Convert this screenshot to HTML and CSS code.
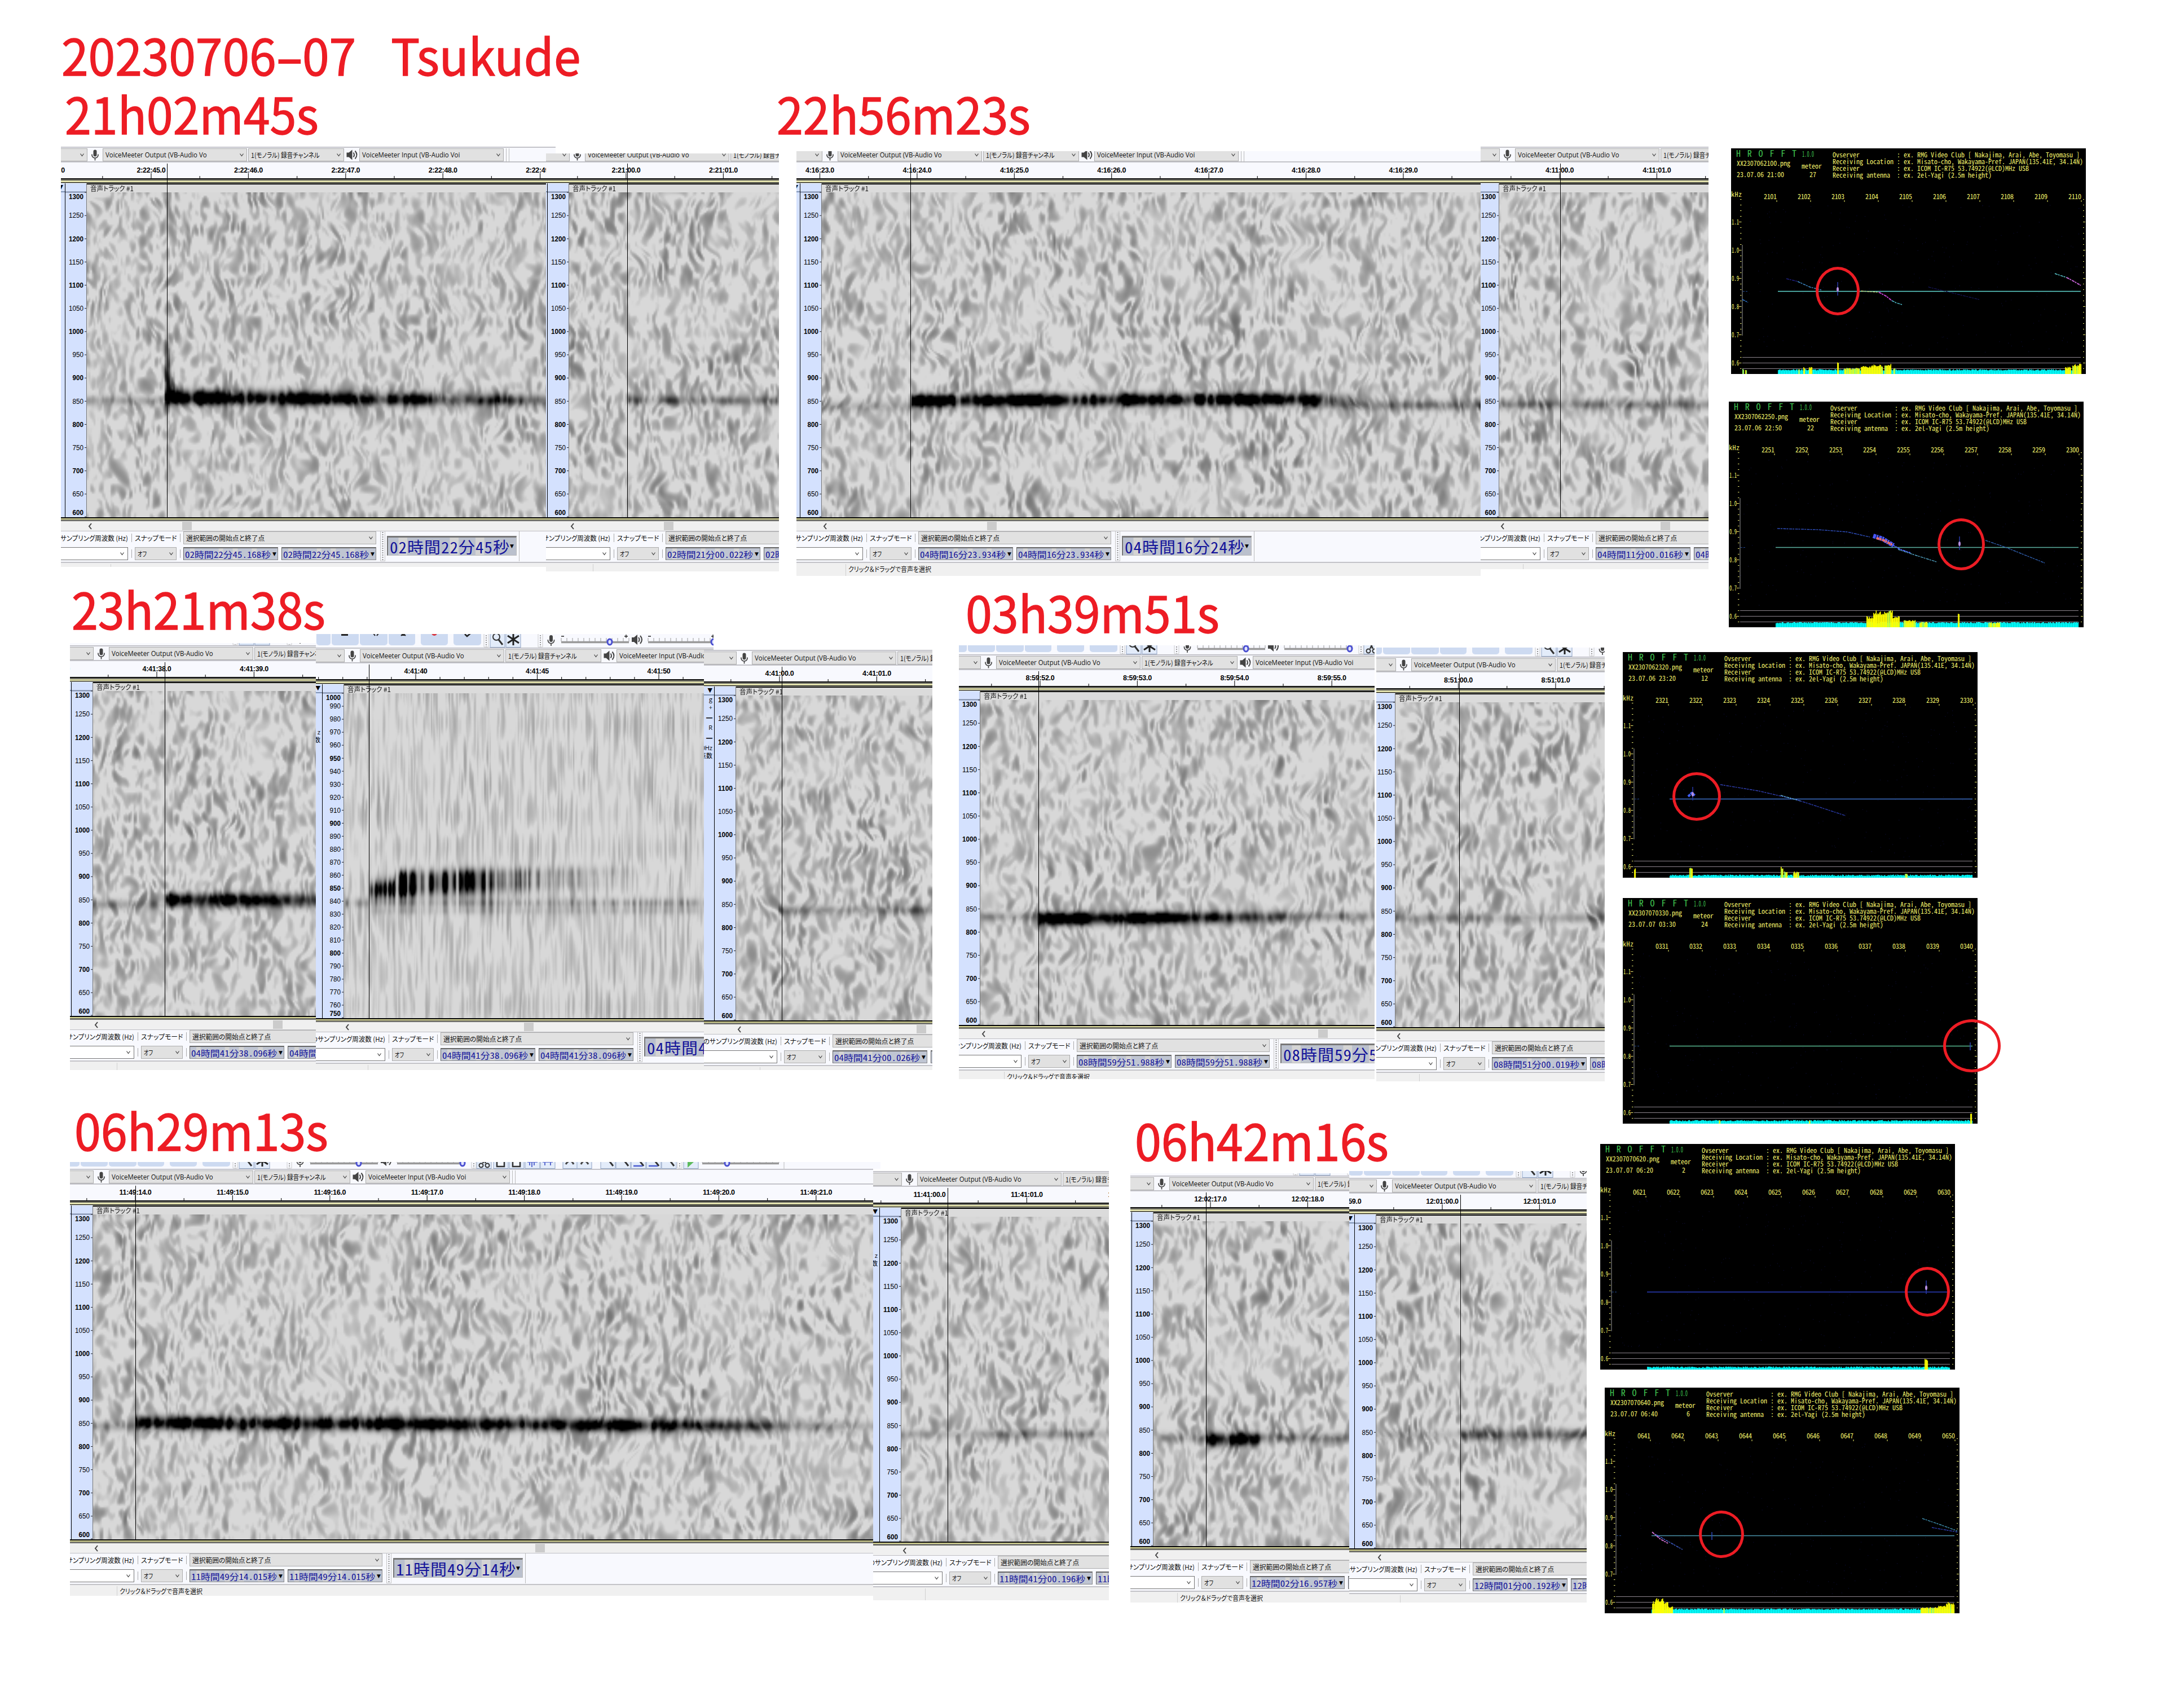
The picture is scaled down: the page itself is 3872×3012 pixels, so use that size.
FILE: index.html
```html
<!DOCTYPE html>
<html lang="ja">
<head>
<meta charset="utf-8">
<title>20230706-07 Tsukude</title>
<link rel="stylesheet" href="styles.css">
</head>
<body>
<main class="sheet" id="sheet">
  <h1 class="mark" style="left:109px;top:47px"><span data-w="920">20230706<span class="dash"><span>-</span></span>07 Tsukude</span></h1>
  <h2 class="mark" style="left:115px;top:151px"><span data-w="450">21h02m45s</span></h2>
  <h2 class="mark" style="left:1377px;top:151px"><span data-w="450">22h56m23s</span></h2>
  <h2 class="mark" style="left:127px;top:1029px"><span data-w="450">23h21m38s</span></h2>
  <h2 class="mark" style="left:1712px;top:1035px"><span data-w="450">03h39m51s</span></h2>
  <h2 class="mark" style="left:132px;top:1953px"><span data-w="450">06h29m13s</span></h2>
  <h2 class="mark" style="left:2012px;top:1971px"><span data-w="450">06h42m16s</span></h2>
</main>
<script src="app.js"></script>
</body>
</html>
```
FILE: styles.css
```css
* { box-sizing: border-box; }
body { margin: 0; background: #fff; }
.sheet { position: relative; width: 3872px; height: 3012px; overflow: hidden; background: #fff; }
.mark { position: absolute; margin: 0; color: #ed1c24; font: 400 88.5px/96px "Noto Sans CJK JP", sans-serif; -webkit-text-stroke: 1.4px #ed1c24; white-space: pre; word-spacing: 44px; }
.dash { display: inline-block; width: 48px; text-align: center; }
.dash span { display: inline-block; transform: scaleX(1.7); }
[data-w] { display: inline-block; white-space: pre; transform-origin: 0 50%; }

.win { position: absolute; overflow: hidden; background: #f8f9fe; font: 12px/16px "Open Sans", "Noto Sans CJK JP", sans-serif; color: #111; }
.inner { display: flex; flex-direction: column; width: 1800px; position: relative; }
.strip { height: 30px; display: block; flex: none; }
.bar { height: 28px; border-top: 2px solid #c3c3c9; border-bottom: 2px solid #c3c3c9; display: flex; padding-top: 1px; }
.combo { height: 23px; background: #e1e1e1; border: 1.5px solid #adadad; display: flex; justify-content: space-between; align-items: center; padding: 0 4px; overflow: hidden; }
.combo svg { flex: none; }
.text { display: block; overflow: visible; white-space: pre; height: 16px; }
.ja { font-family: "Noto Sans CJK JP", sans-serif; font-feature-settings: "palt"; }
.icon { width: 27px; height: 23px; }
.sep { width: 1px; background: #bbb; height: 26px; margin-left: 4px; }
.time { display: block; height: 28px; background: #f8f9fe; }
.band { height: 9px; background: linear-gradient(#111 0 2px, #73736a 2px 4px, #bdbd92 4px 5px, #eeedb6 5px 7px, #000 7px 8px, #cfcfc0 8px 9px); }
.track { display: flex; height: 592px; }
.side { width: 112px; background: #d4e1fe; border-right: 1px solid #000; position: relative; display: flex; flex-direction: column; align-items: flex-end; color: #000; }
.side b { font-size: 11px; line-height: 14px; border-bottom: 2px solid #8094b4; width: 100%; text-align: right; padding-right: 3px; font-family: "DejaVu Sans", sans-serif; }
.side i { font-style: normal; font-size: 11px; line-height: 14px; width: 100%; text-align: right; padding-right: 3px; }
.scale { width: 38px; height: 592px; background: #d4e1fe; flex: none; }
.view { flex: 1; border-top: 2px solid #000; background: #d8d8d8; }
.head { height: 14px; background: #dbdbdb; padding: 0 0 0 6px; line-height: 14px; }
.view canvas { display: block; }
.foot { height: 7px; background: linear-gradient(#000 0 2px, #eeedb0 2px 3px, #c9c77c 3px 4px, #73736d 4px 7px); }
.scroll { height: 17px; background: #f0f0f0; display: flex; align-items: center; padding-left: 152px; }
.thumb { height: 15px; width: 17px; background: #cbcbcb; }
.select { height: 57px; border-top: 1.5px solid #bfbfc4; border-bottom: 2px solid #c3c3c8; display: flex; padding-left: 64px; }
.col { display: flex; flex-direction: column; gap: 5px; }
.line { display: flex; align-items: center; height: 23px; }
.stamps { gap: 6px; }
.rate { width: 159px; justify-content: flex-end; }
.vsep { width: 1px; height: 15px; background: #aaa; margin: 0 5px 0 6px; }
.white { width: 159px; height: 23px; background: #fff; border: 1.5px solid #777; display: flex; align-items: center; justify-content: flex-end; padding-right: 5px; }
.stamp { width: 168px; height: 23px; border: 1.5px solid #8a8a8a; border-top: 2px solid #666; border-left-color: #666; background: #bfc5d2; display: flex; align-items: center; justify-content: space-between; padding: 0 2px; color: #14149a; overflow: hidden; font: 15px/17px "Noto Sans CJK JP", sans-serif; font-feature-settings: "hwid"; }
.stamp u, .big u { text-decoration: none; background: #d4d4d4; }
.stamp s, .big s { text-decoration: none; color: #000; font: 9px/9px "DejaVu Sans", sans-serif; }
.grip { width: 9px; height: 53px; margin-left: 7px; border: 1px solid #c6c6c6; border-top: 0; background: radial-gradient(circle, #999 1px, transparent 1.3px) 0 0/7px 4px; }
.big { margin: 8px 0 0 3px; width: 230px; height: 35px; border: 1px solid #bbb; border-top: 3px solid #777; border-left: 2px solid #777; background: #bac0cd; color: #14149a; display: flex; align-items: center; padding-left: 3px; font: 28px/30px "Noto Sans CJK JP", sans-serif; font-feature-settings: "hwid"; overflow: hidden; }
.big .text { height: 30px; width: 213px; flex: none; letter-spacing: 1px; }
.status { height: 60px; background: #f0f0f0; padding-left: 192px; }
.status div { border-left: 1px solid #d0d0d0; height: 22px; margin-top: 2px; padding: 1px 0 0 4px; }
.cursor { position: absolute; left: 0; top: 60px; width: 1.4px; height: 627px; background: #000; }

.hro { position: absolute; display: block; width: 629px; height: 400px; background: #000; font: 12px "Noto Sans CJK JP", sans-serif; font-feature-settings: "hwid"; }
.hro text { fill: #f2f26a; white-space: pre; }
.hro .logo { fill: #3fc24f; }
.ring { position: absolute; border: 5px solid #ed1c24; border-radius: 50%; }
```
FILE: app.js
```js
const sheet = document.getElementById('sheet');
let seed = 7;
const rnd = () => { seed = (seed * 1664525 + 1013904223) >>> 0; return seed / 4294967296; };
const caret = '<svg width="9" height="7" viewBox="0 0 9 7"><path d="M1.5 1.5l3 4 3-4" fill="none" stroke="#444" stroke-width="1.2"/></svg>';
const mic = '<path d="M0-9a3 3 0 0 1 3 3v6a3 3 0 0 1-6 0v-6a3 3 0 0 1 3-3z" fill="#444"/><path d="M-5.500-1v1.500a5.500 5 0 0 0 11 0V-1M0 5.500V10" fill="none" stroke="#444" stroke-width="1.700"/>';
const spk = '<path d="M-9-4h4l6-5V9l-6-5h-4z" fill="#444"/><path d="M3-4q3 4 0 8M6-7q6 7 0 14" fill="none" stroke="#444" stroke-width="2"/>';
const icon = p => `<svg class="icon" viewBox="-13.500 -11.500 27 23">${p}</svg>`;
const fit = (t, w, c = '') => `<span class="text ${c}" style="width:${w}px"><span data-w="${w}">${t}</span></span>`;
const combo = (w, t) => `<div class="combo" style="width:${w}px">${t || '<span></span>'}${caret}</div>`;
const shade = t => t.replace(/\d/g, (d, i) => i % 2 ? `<u>${d}</u>` : d);

// Button row above the device toolbar; x is measured from the left edge of the spectrogram.
function strip() {
  let g = '';
  for (const [a, b] of [[-150, -100], [-100, -50], [-49, -24], [-22, 26], [28, 77], [79, 126], [136, 184], [194, 243]])
    g += `<rect x="${a}" y="-20" width="${b - a}" height="46" rx="5" fill="#cddaf1"/>`;
  g += '<path d="M-4 5h10v3h-10zM52 5l3 4M61 5l-3 4M101 9l4-4 4 4" fill="#222" stroke="#222" stroke-width="2"/><circle cx="160" cy="4" r="5" fill="#d62f3a"/><path d="M214 6l4 4 6-5" fill="none" stroke="#222" stroke-width="2.500"/>';
  const cell = (x, w = 26) => { g += `<rect x="${x - w / 2}" y="-4" width="${w}" height="33.500" fill="#e3ecfa" stroke="#8fa3c4"/>`; };
  const grip = x => { g += `<path d="M${x} 0V29" stroke="#999" stroke-width="2" stroke-dasharray="2 2"/><path d="M${x - 4} 0V29H${x + 4}V0" fill="none" stroke="#ccc"/>`; };
  [272, 300, 693, 723, 751, 779, 806, 846, 871, 913, 940, 967, 994, 1021, 1060].forEach(x => cell(x));
  [252, 348, 675, 1040].forEach(grip);
  const glass = (x, c = '#333') => { g += `<circle cx="${x - 2}" cy="11" r="6" fill="none" stroke="${c}" stroke-width="2"/><path d="M${x + 2} 16l7 9" stroke="${c}" stroke-width="3"/>`; };
  [272, 913, 940, 967, 994, 1021].forEach(x => glass(x));
  g += '<path d="M300 5V26M290 9l20 13M310 9l-20 13" stroke="#222" stroke-width="3"/>';
  const slide = (a, b, k) => {
    for (let x = a; x <= b; x += (b - a) / 12) g += `<path d="M${x} 13v6" stroke="#999"/>`;
    g += `<path d="M${a} 20.500H${b}" stroke="#999" stroke-width="3.500"/><ellipse cx="${k}" cy="20" rx="4" ry="5" fill="#dfe3ff" stroke="#4a4fd0" stroke-width="3"/><path d="M${a} 10h5M${b - 8} 10h6M${b - 5} 7v6" stroke="#222" stroke-width="1.300"/>`;
  };
  slide(385, 505, 471); slide(539, 659, 655); slide(1080, 1216, 1124);
  g += `<g transform="translate(367 17)">${mic}</g><g transform="translate(519 16)">${spk}</g>`;
  g += '<path d="M688 4l8 16M699 4l-8 16" stroke="#333" stroke-width="2.500"/><circle cx="688" cy="24" r="3.500" fill="none" stroke="#333" stroke-width="2"/><circle cx="699" cy="24" r="3.500" fill="none" stroke="#333" stroke-width="2"/>';
  g += '<path d="M716 4h13v22h-13zM744 4h13v22h-13z" fill="#f5f8ff" stroke="#333" stroke-width="2.500"/><path d="M770 18h18M774 11v13M778 8v19M782 11v13M797 18h18M801 10v14M811 10v14" stroke="#5b6bd0" stroke-width="2"/><path d="M838 22q8-12 14 0M865 22q6-12 13 0" fill="none" stroke="#444" stroke-width="3"/><path d="M1054 6l12 11-12 11z" fill="#5cba5c"/><path d="M958 25h16M985 25h16" stroke="#4a5bd0" stroke-width="2.500"/><path d="M1225 0V30" stroke="#bbb"/>';
  return `<svg class="strip" width="1800" height="30" viewBox="-150 0 1800 30">${g}</svg>`;
}

function timeline(w) {
  let g = '';
  const small = w.step / w.sub;
  for (let k = -w.sub * 2; k < w.sub * 9; k++) {
    const x = w.t0 - w.S + k * small, major = k % w.sub === 0;
    g += `<path d="M${x} ${major ? 19 : 24}V28" stroke="#222" stroke-width="1.200"/>`;
    const n = k / w.sub;
    if (major && w.labels[n + 1]) g += `<text x="${x + (n < 0 ? w.dx || 0 : 0)}" y="18" text-anchor="middle">${w.labels[n + 1]}</text>`;
  }
  return `<svg class="time" width="1800" height="28" viewBox="-150 0 1800 28" font-family="Liberation Sans, sans-serif" font-size="12.500" font-weight="700" letter-spacing="-.3">${g}</svg>`;
}

function scale(w) {
  const hi = w.fine ? 1000 : 1300, lo = w.fine ? 750 : 600, st = w.fine ? 10 : 50;
  const top = 16, H = 576;
  let g = '<path d="M0 15.500H38" stroke="#7c8aa5" stroke-width="2"/>';
  for (let f = hi; f >= lo; f -= st) {
    const y = top + (hi - f) / (hi - lo) * H;
    const ty = f === hi ? y + 12 : f === lo ? y - 4 : y + 4.300;
    const bold = f === hi || f === lo || f % (w.fine ? 50 : 100) === 0;
    g += `<text x="32" y="${ty}" text-anchor="end" textLength="${f >= 1000 ? 26 : 19.5}" lengthAdjust="spacingAndGlyphs" font-weight="${bold ? 700 : 400}">${f}</text><path d="M34 ${Math.min(y, 591)}h4" stroke="#222"/>`;
  }
  return `<svg class="scale" width="38" height="592" font-family="Liberation Sans, sans-serif" font-size="12.500">${g}<path d="M37.500 0V592" stroke="#777"/></svg>`;
}

// Smooth random field on a lattice of cw x ch pixels.
function field(W, H, cw, ch) {
  const nx = Math.ceil(W / cw) + 4, ny = Math.ceil(H / ch) + 4, v = new Float32Array(nx * ny);
  for (let i = 0; i < v.length; i++) v[i] = rnd() + rnd() + rnd() - 1.5;
  const s = t => t * t * (3 - 2 * t);
  return (x, y) => {
    const fx = Math.max(0, x / cw), fy = Math.max(0, y / ch), ix = Math.floor(fx), iy = Math.floor(fy), u = s(fx - ix), t = s(fy - iy), o = iy * nx + ix;
    return (v[o] * (1 - u) + v[o + 1] * u) * (1 - t) + (v[o + nx] * (1 - u) + v[o + nx + 1] * u) * t;
  };
}

function paint(c, w) {
  const q = w.fine ? 2 : 3, W = Math.ceil(c.width / q), H = 576 / q;
  const X = c.width + 420, cw = w.fine ? 4.5 : 9, ch = w.fine ? 70 : 29;
  const a1 = field(X, 700, cw, ch), a2 = field(X, 700, cw, ch * 0.8), b1 = field(X, 700, cw, ch), b2 = field(X, 700, cw, ch * 0.8);
  const m = field(X, 700, 40, 44), e = field(X, 700, w.fine ? 4 : 8, 400), e2 = field(X, 700, 30, 400), en = field(X, 700, 60, 60);
  const sh = w.fine ? 0 : 0.2;
  const t = document.createElement('canvas'); t.width = W; t.height = H;
  const g = t.getContext('2d'), d = g.createImageData(W, H);
  for (let j = 0; j < H; j++) for (let i = 0; i < W; i++) {
    const x = i * q, y = j * q, wx = x + 30 + m(x, y) * (w.fine ? 1 : 12);
    const p1 = wx + sh * y, p2 = wx + sh * (576 - y);
    const A = a1(p1, y) + a2(p2, y + 9), B = b1(p1 + 4, y + 13) + b2(p2 + 5, y + 4);
    const P = Math.max(0, Math.sqrt(A * A + B * B) - (w.fine ? 0.5 : 0.46));
    let k = (w.fine ? 62 : 84) * (1 - Math.exp(-P * (w.fine ? 1.2 : 1.45))) * (1 + en(x, y) * 0.5);
    const r = w.fine ? Math.max(0.15, 0.8 + e(x, 5) * 1) : Math.max(0.35, 0.85 + e(x, 5) * 0.4 + e2(x, 5) * 0.3);
    for (const [x0, x1, y0, sg, dark, fade] of w.bands) {
      if (x < x0 || x > x1) continue;
      const yy = Array.isArray(y0) ? y0[0] + (y0[1] - y0[0]) * (x - x0) / (x1 - x0) : y0;
      const f = fade ? Math.min(1, (x1 - x) / fade) : 1;
      k += dark * f * r * Math.exp(-((y - yy) ** 2) / (2 * sg * sg));
    }
    const p = (j * W + i) * 4, l = Math.max(0, 216 - k);
    d.data[p] = d.data[p + 1] = d.data[p + 2] = l; d.data[p + 3] = 255;
  }
  g.putImageData(d, 0, 0);
  c.getContext('2d').drawImage(t, 0, 0, W * q, H * q);
}

const C = (y, k = 75) => [0, 9999, y, 6, k, 0];
const wins = [
  { L: 108, Y: 260, R: 985, B: 272, S: 154, T: 341, t0: 268, labels: [], cur: 2000, bands: [] },
  { L: 108, Y: 260, R: 968, B: 1005, S: 154, T: 341, t0: 268, dx: -6, labels: ['2:22:44.0', '2:22:45.0', '2:22:46.0', '2:22:47.0', '2:22:48.0', '2:22:49.0'], cur: 296, thumb: 169, st: '02時間22分45.168秒', big: '02時間22分45秒', bands: [C(368, 60), [137, 920, [361, 367], 8.5, 260, 560], [137, 145, 320, 40, 180, 0], [145, 154, 345, 14, 110, 0]] },
  { L: 968, Y: 272, R: 1381, B: 1013, S: 1009, T: 341, t0: 1110, labels: ['', '2:21:00.0', '2:21:01.0'], cur: 1112, thumb: 168, st: '02時間21分00.022秒', bands: [[104, 9999, 368, 6, 75, 0]] },
  { L: 1412, Y: 268, R: 2625, B: 1021, S: 1457, T: 341, t0: 1453.500, labels: ['', '4:16:23.0', '4:16:24.0', '4:16:25.0', '4:16:26.0', '4:16:27.0', '4:16:28.0', '4:16:29.0'], cur: 1614, thumb: 293, st: '04時間16分23.934秒', big: '04時間16分24秒', hint: 1, bands: [[0, 157, 378, 6, 60, 0], [850, 9999, 376, 6, 75, 0], [157, 960, [368, 365], 7.5, 300, 150]] },
  { L: 2625, Y: 260, R: 3029, B: 1009, S: 2658, T: 341, t0: 2765, labels: ['', '4:11:00.0', '4:11:01.0'], cur: 2766, thumb: 286, st: '04時間11分00.016秒', bands: [C(375, 70)] },
  { L: 124, Y: 1140, R: 560, B: 1897, S: 165, T: 1225, t0: 278, dx: -7, labels: ['4:41:37.0', '4:41:38.0', '4:41:39.0'], cur: 292, thumb: 319, st: '04時間41分38.096秒', bands: [C(377, 55), [127, 900, 368, 7.5, 250, 750]] },
  { L: 560, Y: 1124, R: 1265, B: 1152, S: 610, T: 1229, t0: 737, labels: [], cur: 3000, bands: [] },
  { L: 560, Y: 1124, R: 1248, B: 1897, S: 610, T: 1229, t0: 737, step: 215.500, sub: 5, labels: ['', '4:41:40', '4:41:45', '4:41:50'], cur: 654, thumb: 319, st: '04時間41分38.096秒', big: '04時間41分38秒', fine: 1, side: 1, bands: [C(371, 50), [44, 9999, 385, 5, 25, 0], [44, 260, [348, 326], 11, 150, 180], [44, 380, [350, 344], 10, 110, 200], [90, 540, [324, 314], 8, 120, 330], [150, 500, 336, 8, 80, 240]] },
  { L: 1248, Y: 1152, R: 1653, B: 1897, S: 1305, T: 1233, t0: 1382, labels: ['', '4:41:00.0', '4:41:01.0'], cur: 1386, thumb: 320, st: '04時間41分00.026秒', side: 2, bands: [[75, 9999, 379, 6, 65, 0]] },
  { L: 1700, Y: 1144, R: 2437, B: 1913, S: 1738, T: 1241, t0: 1844, labels: ['', '8:59:52.0', '8:59:53.0', '8:59:54.0', '8:59:55.0'], cur: 1841, thumb: 599, st: '08時間59分51.988秒', big: '08時間59分52秒', hint: 1, bands: [C(382, 60), [102, 600, [387, 384], 7.5, 240, 330]] },
  { L: 2440, Y: 1148, R: 2845, B: 1917, S: 2474, T: 1245, t0: 2585.500, labels: ['', '8:51:00.0', '8:51:01.0'], cur: 2587, thumb: 900, st: '08時間51分00.019秒', bands: [C(381, 60)] },
  { L: 124, Y: 2060, R: 1561, B: 2072, S: 165, T: 2153, t0: 240, labels: [], cur: 3000, bands: [] },
  { L: 124, Y: 2060, R: 1548, B: 2829, S: 165, T: 2153, t0: 240, labels: ['', '11:49:14.0', '11:49:15.0', '11:49:16.0', '11:49:17.0', '11:49:18.0', '11:49:19.0', '11:49:20.0', '11:49:21.0'], cur: 240, thumb: 784, st: '11時間49分14.015秒', big: '11時間49分14秒', hint: 1, bands: [C(374, 50), [74, 1350, [367, 374], 8, 240, 500]] },
  { L: 1548, Y: 2076, R: 1966, B: 2837, S: 1598, T: 2157, t0: 1648, labels: ['', '11:41:00.0', '11:41:01.0', '11:41:02.0'], cur: 1680, thumb: 900, st: '11時間41分00.196秒', side: 1, bands: [C(384, 60)] },
  { L: 2004, Y: 2080, R: 2392, B: 2841, S: 2045, T: 2165, t0: 2146, labels: ['', '12:02:17.0', '12:02:18.0'], cur: 2138, thumb: 900, st: '12時間02分16.957秒', hint: 1, bands: [C(382, 75), [92, 190, 386, 8.5, 260, 12]] },
  { L: 2392, Y: 2076, R: 2813, B: 2841, S: 2440, T: 2169, t0: 2557, labels: ['12:00:59.0', '12:01:00.0', '12:01:01.0'], cur: 2589, thumb: 900, st: '12時間01分00.192秒', bands: [C(373, 40), [150, 9999, 374, 7, 55, 0], [150, 230, 372, 9, 70, 60]] }
];

for (const w of wins) {
  w.step = w.step || 172.400; w.sub = w.sub || 2;
  const el = document.createElement('section');
  el.className = 'win';
  el.style.cssText = `left:${w.L}px;top:${w.Y}px;width:${w.R - w.L}px;height:${w.B - w.Y}px`;
  const side = '<b>▼</b>' + (w.side === 2 ? '<i>g</i><i>+</i><i>▁</i><i style="margin-top:8px">R</i><i>▁</i><i style="margin-top:8px">0Hz</i><i>点数</i>' : w.side ? '<i style="margin-top:62px">z</i><i>数</i>' : '');
  const stamp = w.st ? `<div class="stamp">${fit(shade(w.st), 152)}<s>▼</s></div>` : '';
  el.innerHTML = `<div class="inner" style="margin-left:${w.S - 150 - w.L}px;margin-top:${w.T - 111 - w.Y}px">
    ${strip()}
    <div class="bar">${combo(151)}${icon(mic)}${combo(256, fit('VoiceMeeter Output (VB-Audio Vo', 180))}<span style="width:2px"></span>${combo(170, fit('1(モノラル) 録音チャンネル', 122, 'ja'))}${icon(spk)}${combo(256, fit('VoiceMeeter Input (VB-Audio Voi', 173))}<span class="sep"></span><span class="sep"></span></div>
    ${timeline(w)}
    <div class="band"></div>
    <div class="track"><div class="side">${side}</div>${scale(w)}<div class="view"><div class="head">${fit('音声トラック #1', 77, 'ja')}</div><canvas width="${Math.max(10, w.R - w.S)}" height="576"></canvas></div></div>
    <div class="foot"></div>
    <div class="scroll"><svg width="8" height="12"><path d="M6 1L2 6l4 5" fill="none" stroke="#444" stroke-width="2"/></svg><span class="thumb" style="margin-left:${(w.thumb || 0) - 10}px"></span></div>
    <div class="select">
      <div class="col"><div class="line rate">${fit('のサンプリング周波数 (Hz)', 131, 'ja')}</div><div class="white">${caret}</div></div>
      <div class="col"><div class="line"><span class="vsep"></span>${fit('スナップモード', 74, 'ja')}<span class="vsep"></span></div><div class="line"><span class="vsep"></span>${combo(74, fit('オフ', 16, 'ja'))}<span class="vsep"></span></div></div>
      <div class="col">${combo(342, fit('選択範囲の開始点と終了点', 139, 'ja'))}<div class="line stamps">${stamp}${stamp}</div></div>
      ${w.big ? `<span class="grip"></span><div class="big">${fit(shade(w.big), 213)}<s>▼</s></div><span class="sep" style="height:53px"></span>` : '<span class="grip"></span>'}
    </div>
    <div class="status"><div>${w.hint ? fit('クリック＆ドラッグで音声を選択', 147, 'ja') : ''}</div></div>
    <div class="cursor" style="left:${w.cur - w.S + 150}px"></div>
  </div>`;
  sheet.append(el);
  if (w.bands.length) paint(el.querySelector('canvas'), w);
}

const head = ['Ovserver           : ex. RMG Video Club [ Nakajima, Arai, Abe, Toyomasu ]', 'Receiving Location : ex. Misato-cho, Wakayama-Pref. JAPAN(135.41E, 34.14N)', 'Receiver           : ex. ICOM IC-R75 53.74922(@LCD)MHz USB', 'Receiving antenna  : ex. 2el-Yagi (2.5m height)'];
const hros = [
  { x: 3069, y: 263, f: '2307062100', d: '23.07.06 21:00', n: '27', m: ['2101', '2102', '2103', '2104', '2105', '2106', '2107', '2108', '2109', '2110'], sy: 253, cy: 7, sc: '#62d8d0',
    bars: [[20, 23, 10], [25, 27, 7], [119, 121, 10], [128, 131, 13], [138, 143, 13], [188, 190, 24], [200, 228, 11], [230, 248, 14], [248, 268, 17], [272, 284, 18], [288, 291, 11], [592, 602, 13], [605, 618, 18], [618, 620, 22]],
    tr: [['98,231 118,236', '#202080'], ['118,236 140,246 160,251', '#3f8fd0'], ['230,253 262,255', '#c8d880'], ['262,255 275,262 285,270', '#c040d0', 2], ['285,270 293,274 303,277', '#50c0d0'], ['350,246 440,268', '#141450'], ['574,222 595,229', '#60d8e0'], ['595,229 610,237 620,243', '#c060d0', 2], ['20,268 30,273', '#3080e0']], blob: [189, 250], ring: [3258, 516, 39, 43] },
  { x: 3065, y: 712, f: '2307062250', d: '23.07.06 22:50', n: '22', m: ['2251', '2252', '2253', '2254', '2255', '2256', '2257', '2258', '2259', '2300'], sy: 258, cy: 8, sc: '#5bb0a0',
    bars: [[244, 260, 20], [256, 290, 30], [288, 302, 20], [310, 330, 13], [338, 352, 10], [406, 409, 28], [460, 480, 9]],
    tr: [['86,225 158,227 210,231 250,240', '#3050c0'], ['256,238 272,243 292,255', '#4858ff', 8], ['262,242 275,246 290,254', '#f07060', 4], ['290,254 304,262 322,268', '#5060ff', 2], ['300,262 330,272 368,284', '#50a0c0'], ['455,246 490,258 560,286', '#3060b0']], blob: [409, 252], ring: [3477, 965, 42, 46] },
  { x: 2877, y: 1156, f: '2307062320', d: '23.07.06 23:20', n: '12', m: ['2321', '2322', '2323', '2324', '2325', '2326', '2327', '2328', '2329', '2330'], sy: 260, cy: 4, sc: '#3d6fc8',
    bars: [[20, 23, 18], [118, 124, 20], [280, 284, 20], [286, 292, 12], [302, 312, 11], [500, 504, 8]],
    tr: [['173,235 240,246 309,262', '#303fb0'], ['280,254 315,264', '#60b0d0'], ['309,262 340,272 395,290', '#2838a0'], ['116,256 122,250 128,254', '#4060ff', 4]], blob: [124, 252], ring: [3008, 1412, 43, 43] },
  { x: 2877, y: 1592, f: '2307070330', d: '23.07.07 03:30', n: '24', m: ['0331', '0332', '0333', '0334', '0335', '0336', '0337', '0338', '0339', '0340'], sy: 262, cy: 5, sc: '#58b890', bars: [[616, 619, 18], [170, 173, 7], [330, 333, 7]], tr: [], blob: [616, 262], faint: 1, ring: [3496, 1854, 51, 47] },
  { x: 2837, y: 2028, f: '2307070620', d: '23.07.07 06:20', n: '2', m: ['0621', '0622', '0623', '0624', '0625', '0626', '0627', '0628', '0629', '0630'], sy: 262, cy: 4, sc: '#2c3fc0', bars: [[575, 580, 19]], tr: [], blob: [578, 255], ring: [3417, 2290, 40, 44] },
  { x: 2845, y: 2460, f: '2307070640', d: '23.07.07 06:40', n: '6', m: ['0641', '0642', '0643', '0644', '0645', '0646', '0647', '0648', '0649', '0650'], sy: 262, cy: 7, sc: '#4a90a8',
    bars: [[84, 112, 22], [90, 104, 27], [112, 120, 12], [210, 213, 9], [560, 590, 11], [590, 604, 14], [605, 620, 20]],
    tr: [['84,256 98,268 112,276', '#d070d0', 2], ['90,260 138,287', '#3f60d0'], ['563,232 595,243 625,254', '#4090b0'], ['580,248 625,256', '#303fb0']], blob: [190, 262], faint: 1, ring: [3052, 2720, 40, 42] }
];
hros.forEach(h => {
  let g = '<text class="logo" font-size="16" x="9" y="15" textLength="107">H R O F F T</text><text class="logo" font-size="13" x="126" y="15" textLength="21" lengthAdjust="spacingAndGlyphs">1.0.0</text>';
  g += `<text x="10" y="31" textLength="95">XX${h.f}.png</text><text x="125" y="36" textLength="36">meteor</text><text x="10" y="51" textLength="84">${h.d}</text><text x="151" y="51" text-anchor="end">${h.n}</text><text x="0" y="86" textLength="19">kHz</text>`;
  head.forEach((t, i) => { g += `<text x="180" y="${15.5 + 12 * i}" xml:space="preserve" textLength="${t.length * 6}">${t}</text>`; });
  h.m.forEach((t, i) => { g += `<text x="${81 + 60 * i}" y="90" text-anchor="end" textLength="23">${t}</text><path d="M${81 + 60 * i} 92v3" stroke="#f2f26a"/>`; });
  for (let y = 90; y <= 390; y += 10) {
    const major = (y - 130) % 50 === 0 && y >= 130;
    g += `<path d="M${major ? 14 : 16} ${y + .5}H18.500M624 ${y + .5}h${major ? 4 : 2}" stroke="#e8e870"/>`;
    if (major) g += `<text x="1" y="${y + 5}" textLength="13" lengthAdjust="spacingAndGlyphs">${(1.1 - (y - 130) / 500).toFixed(1)}</text>`;
  }
  g += '<path d="M20 171V332" stroke="#999"/><path d="M20 370.500H620M20 380.500H620M20 390.500H620" stroke="#8d858d"/>';
  for (let i = 0; i < 260; i++) g += `<path d="M${20 + rnd() * 600} ${95 + rnd() * 270}v1.500" stroke="#0c0c30"/>`;
  g += `<path d="M83 ${h.sy + .5}H620" stroke="${h.sc}" stroke-width="1.400"/><path d="M21 ${h.sy + .5}h10" stroke="#204890" stroke-dasharray="3 2"/>`;
  h.tr.forEach(([p, c, sw]) => { g += `<polyline points="${p}" fill="none" stroke="${c}" stroke-width="${sw || 1.4}" stroke-dasharray="5 1 3 1.5"/>`; });
  const [bx, by] = h.blob;
  g += h.faint ? `<path d="M${bx} ${by - 6}v14" stroke="#2c48b8" stroke-width="1.500"/>` : `<path d="M${bx} ${by - 13}v24" stroke="#2838a8" stroke-width="1.500"/><ellipse cx="${bx}" cy="${by}" rx="2" ry="4" fill="#b890e0"/>`;
  for (let x = 83; x < 620; x += 1.5) { const v = h.cy + rnd() * 2.5 - 1; g += `<rect x="${x}" y="${400 - v}" width="1.600" height="${v}" fill="#0ff"/>`; }
  h.bars.forEach(([a, b, v]) => { for (let x = a; x < b; x += 1.5) { const k = v * (0.75 + rnd() * 0.25); g += `<rect x="${x}" y="${400 - k}" width="1.600" height="${k}" fill="${rnd() < (v < 12 ? .4 : .05) ? '#a0ff60' : '#ff0'}"/>`; } });
  sheet.insertAdjacentHTML('beforeend', `<svg class="hro" viewBox="0 0 629 400" style="left:${h.x}px;top:${h.y}px">${g}</svg>`);
  const [cx, cy, rx, ry] = h.ring;
  sheet.insertAdjacentHTML('beforeend', `<div class="ring" style="left:${cx - rx}px;top:${cy - ry}px;width:${rx * 2}px;height:${ry * 2}px"></div>`);
});

// Stretch each label to the width it is given.
document.querySelectorAll('[data-w]').forEach(s => { const n = s.offsetWidth; if (n) s.style.transform = `scaleX(${s.dataset.w / n})`; });
```
